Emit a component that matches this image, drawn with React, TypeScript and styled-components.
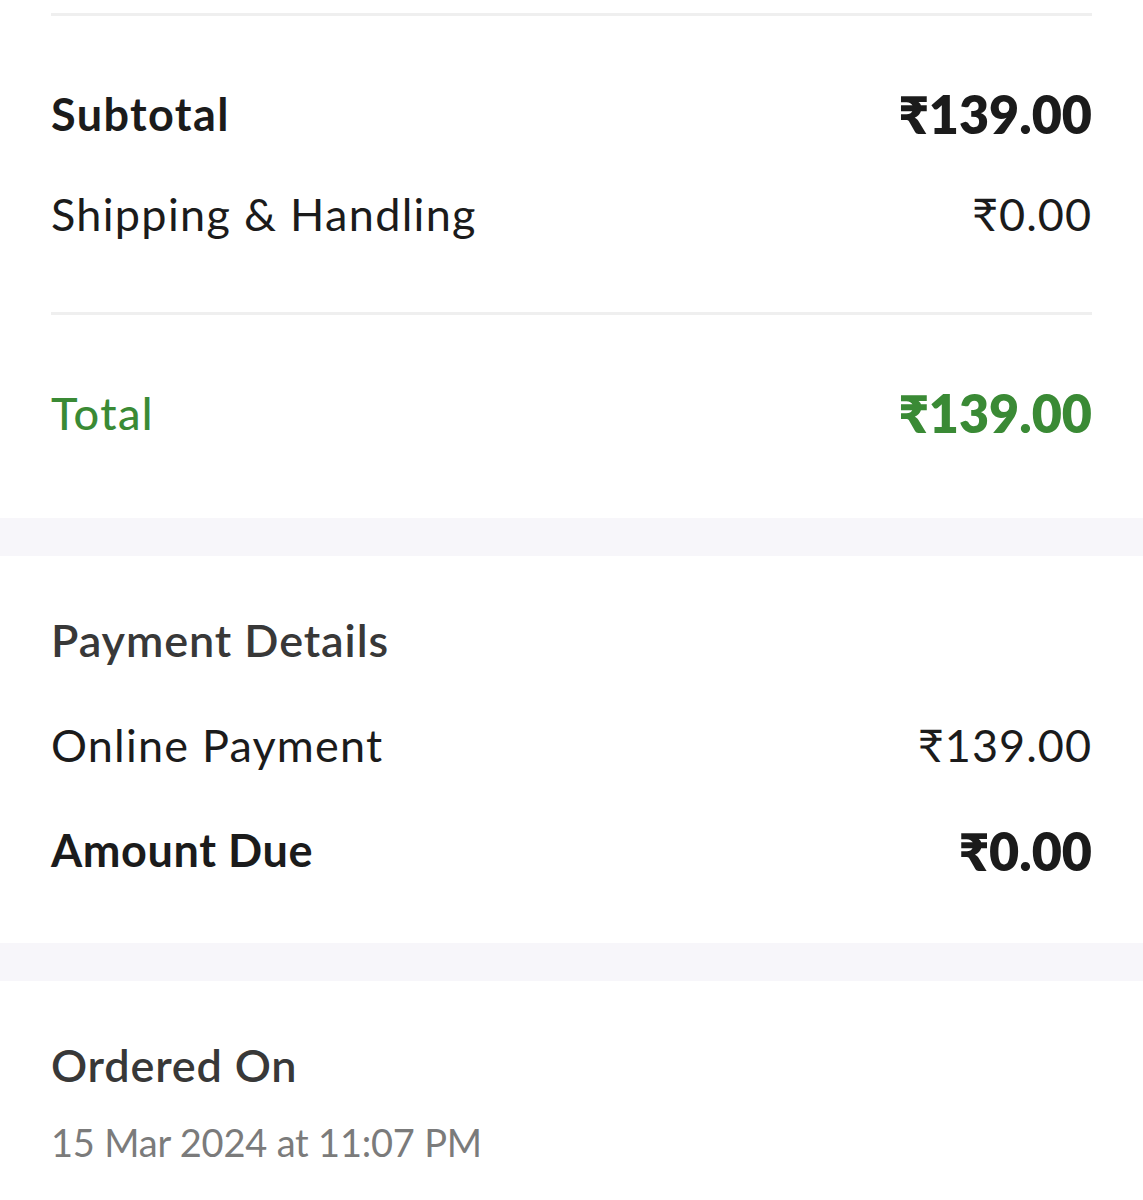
import React from "react";
import styled, { createGlobalStyle } from "styled-components";

const Global = createGlobalStyle`
  html, body { margin: 0; padding: 0; background: #ffffff; }
  body { font-family: "Lato", "Noto Sans", sans-serif; -webkit-font-smoothing: antialiased; }
`;

const Page = styled.div`
  width: 1143px;
  display: flex;
  flex-direction: column;
`;

const Section = styled.section<{ $top: number; $bottom: number }>`
  padding: ${(p) => p.$top}px 51px ${(p) => p.$bottom}px 51px;
  display: flex;
  flex-direction: column;
`;

const Divider = styled.div<{ $mt: number; $mb: number }>`
  height: 3px;
  background: #efefef;
  margin: ${(p) => p.$mt}px 0 ${(p) => p.$mb}px 0;
`;

const Band = styled.div`
  height: 38px;
  background: #f7f6fa;
`;

const Row = styled.div<{ $h: number }>`
  height: ${(p) => p.$h}px;
  display: flex;
  align-items: center;
  justify-content: space-between;
`;

type Tone = "dark" | "green" | "heading" | "muted";
const colors: Record<Tone, string> = {
  dark: "#1b1b1b",
  green: "#3a8a35",
  heading: "#383838",
  muted: "#7b7b7b",
};

const Label = styled.span<{ $weight?: number; $tone?: Tone; $size?: number; $ls?: number }>`
  font-family: "Lato", "Noto Sans", sans-serif;
  font-size: ${(p) => p.$size ?? 45}px;
  font-weight: ${(p) => p.$weight ?? 400};
  letter-spacing: ${(p) => p.$ls ?? 1.2}px;
  color: ${(p) => colors[p.$tone ?? "dark"]};
  line-height: 1;
`;

const Amount = styled.span<{ $bold?: boolean; $tone?: Tone; $size?: number }>`
  font-family: "Lato", "Noto Sans", sans-serif;
  font-size: ${(p) => p.$size ?? 45}px;
  font-weight: ${(p) => (p.$bold ? 800 : 400)};
  letter-spacing: ${(p) => (p.$bold ? 0 : 1)}px;
  color: ${(p) => colors[p.$tone ?? "dark"]};
  line-height: 1;
`;

export default function App() {
  return (
    <Page>
      <Global />
      <Section $top={0} $bottom={55}>
        <Divider $mt={13} $mb={48} />
        <Row $h={100}>
          <Label $weight={700} $ls={1.4}>Subtotal</Label>
          <Amount $bold $size={52}>₹139.00</Amount>
        </Row>
        <Row $h={100}>
          <Label $ls={1.3}>Shipping &amp; Handling</Label>
          <Amount>₹0.00</Amount>
        </Row>
        <Divider $mt={48} $mb={48} />
        <Row $h={100}>
          <Label $tone="green" $weight={500} $ls={1.4}>Total</Label>
          <Amount $bold $tone="green" $size={52}>₹139.00</Amount>
        </Row>
      </Section>
      <Band />
      <Section $top={32} $bottom={40}>
        <Row $h={105}>
          <Label $weight={600} $tone="heading" $ls={0.9}>Payment Details</Label>
        </Row>
        <Row $h={105}>
          <Label $ls={1.2}>Online Payment</Label>
          <Amount>₹139.00</Amount>
        </Row>
        <Row $h={105}>
          <Label $weight={700} $ls={0.6}>Amount Due</Label>
          <Amount $bold $size={52}>₹0.00</Amount>
        </Row>
      </Section>
      <Band />
      <Section $top={44} $bottom={20}>
        <Row $h={80}>
          <Label $weight={600} $tone="heading" $ls={0.8}>Ordered On</Label>
        </Row>
        <Row $h={74}>
          <Label $tone="muted" $size={38} $ls={-0.2}>15 Mar 2024 at 11:07 PM</Label>
        </Row>
      </Section>
    </Page>
  );
}
